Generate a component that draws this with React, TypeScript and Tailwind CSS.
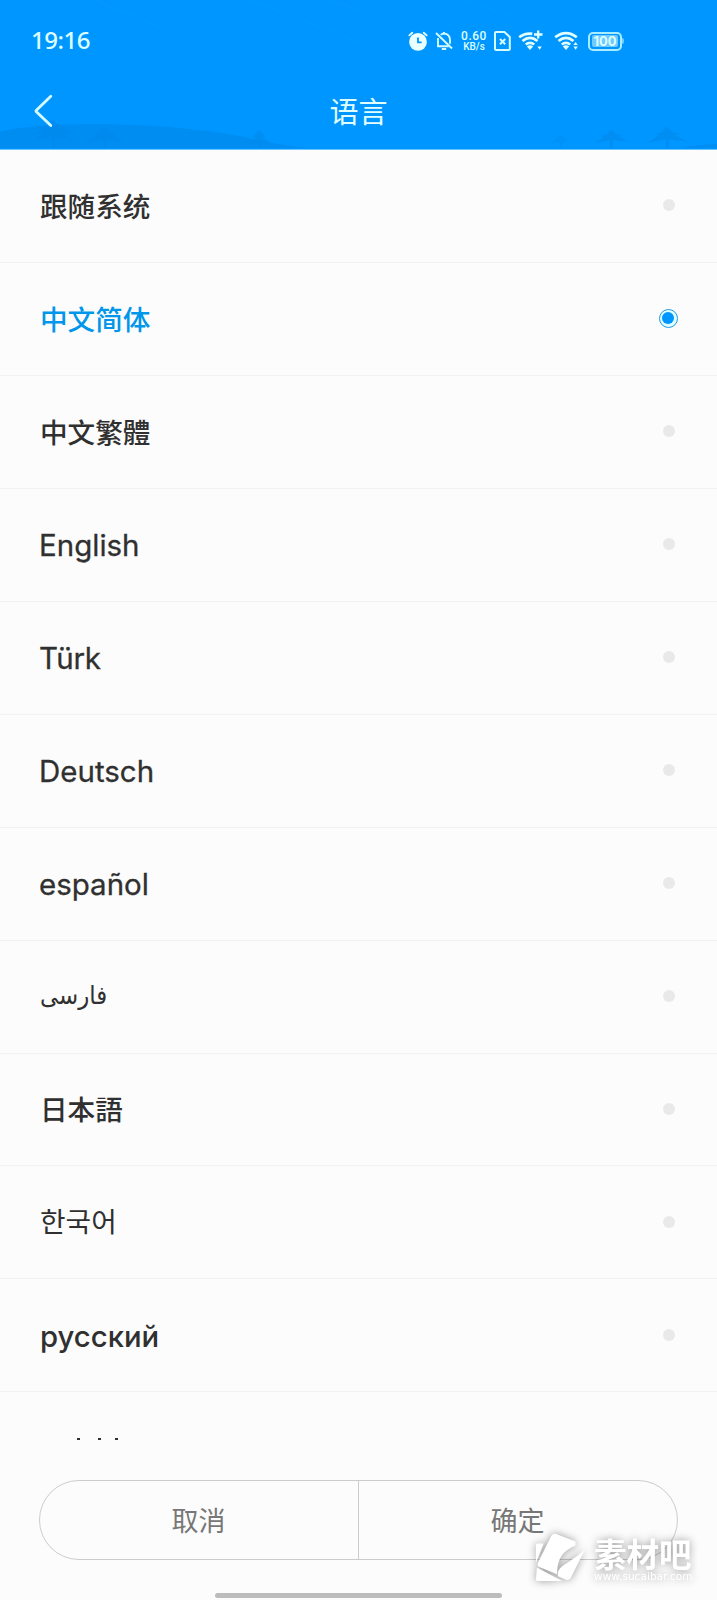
const languages = [
  { label: '跟随系统', style: "pb-[2px] font-['Noto_Sans_CJK_SC'] text-[27.6px] font-medium", lang: 'zh-CN' },
  { label: '中文简体', style: "pb-[2px] font-['Noto_Sans_CJK_SC'] text-[27.6px] font-medium", lang: 'zh-CN', selected: true },
  { label: '中文繁體', style: "pb-[2px] font-['Noto_Sans_CJK_SC'] text-[27.6px] font-medium", lang: 'zh-TW' },
  { label: 'English', style: "-ml-px pt-px font-['Inter'] text-[29.5px] font-normal [-webkit-text-stroke:0.3px_currentColor]", lang: 'en' },
  { label: 'Türk', style: "-ml-px pt-px font-['Inter'] text-[29.5px] font-normal tracking-[-0.3px] [-webkit-text-stroke:0.3px_currentColor]", lang: 'tr' },
  { label: 'Deutsch', style: "-ml-px pt-px font-['Inter'] text-[29.5px] font-normal [-webkit-text-stroke:0.3px_currentColor]", lang: 'de' },
  { label: 'español', style: "-ml-px pt-px font-['Inter'] text-[29.5px] font-normal [-webkit-text-stroke:0.3px_currentColor]", lang: 'es' },
  { label: 'فارسی', style: "pb-[3px] font-['DejaVu_Sans_Condensed','DejaVu_Sans'] text-[25.4px] font-normal [font-stretch:condensed]", lang: 'fa' },
  { label: '日本語', style: "pb-[2px] font-['Noto_Sans_CJK_JP'] text-[27.6px] font-medium", lang: 'ja' },
  { label: '한국어', style: "pb-[4px] font-['Noto_Sans_CJK_KR'] text-[27.8px] font-normal", lang: 'ko' },
  { label: 'русский', style: "pt-[3px] font-['Inter'] text-[29.3px] font-medium", lang: 'ru' },
];

function Scenery() {
  return (
    <svg className="absolute inset-0 h-full w-full" viewBox="0 0 717 150" preserveAspectRatio="none">
      <path d="M0 133C40 122 155 121 245 138Q275 146 310 149H0Z" fill="#008df1" />
      <g fill="#0088ea" opacity=".55">
        <path d="M52 120l9 7 8 2-5 1 12 6-14-2 13 8-20-4v11h-3v-11l-20 4 13-8-14 2 12-6-5-1 8-2z" />
        <path d="M104 127l7 6 7 2-5 1 12 8-19-4v9h-3v-9l-20 5 13-9-4-1 7-2z" />
        <path d="M259 131l7 7-4 0 9 6-10-1v6h-3v-6l-11 2 9-6-4-1z" />
        <path d="M611 130l6 5 6 1-4 1 10 6-16-2v8h-3v-8l-15 3 9-6-3-1 6-2z" />
        <path d="M666 127l7 6 7 2-5 1 13 7-19-3v9h-3v-9l-19 4 12-8-4-1 7-2z" />
        <path d="M561 135l5 5 5 3-9 0v6h-2v-6l-9 1 5-4z" opacity=".5" />
        <path d="M680 149Q700 145 717 145V149Z" />
      </g>
      <path d="M95 0L170 32M250 0L360 43M330 0L365 12M462 0L520 20" stroke="#1a9dff" strokeWidth="1" opacity=".25" />
    </svg>
  );
}

function AlarmIcon() {
  return (
    <svg className="h-5 w-5" viewBox="0 0 20 20" fill="none">
      <circle cx="10" cy="10.9" r="8.9" fill="#eaffff" />
      <path d="M1.3 4.4L4.3 1.8M18.7 4.4L15.7 1.8" stroke="#eaffff" strokeWidth="1.8" strokeLinecap="round" />
      <path d="M10 6.5V11.4H13.6" stroke="#0096ff" strokeWidth="1.8" />
    </svg>
  );
}

function MutedBellIcon() {
  return (
    <svg className="h-5 w-[18px]" viewBox="0 0 18 20" fill="none" stroke="#d5fbff" strokeWidth="1.9">
      <path d="M1 2L17 17.5" />
      <path d="M3 7V15.2H13.8M5.8 3.8Q7 2.6 9 2.5Q14.8 3 15 9V12.8M9 2.5V1" />
      <path d="M6.8 18H11.2" strokeWidth="2" />
    </svg>
  );
}

function SimIcon() {
  return (
    <svg className="h-5 w-[17px]" viewBox="0 0 17 20" fill="none" stroke="#d5fbff" strokeWidth="2">
      <path d="M2 1H10.4L15.8 6V18A1 1 0 0 1 14.8 19H2A1 1 0 0 1 1 18V2A1 1 0 0 1 2 1Z" />
      <path d="M6 8L11.2 13.2M11.2 8L6 13.2" />
    </svg>
  );
}

function WifiIcon({ plus = false }: { plus?: boolean }) {
  return (
    <svg className="h-5 w-[25px] overflow-visible" viewBox="0 0 25 20" fill="none" stroke="#e2ffff" strokeWidth="2.7">
      <path d={plus ? 'M1.2 6.3Q7 1.8 14.3 2.8' : 'M1.2 6.3Q12 -2 22.8 6.3'} />
      <path d="M4.5 10Q12 3.8 19.5 10" />
      <path d="M7.8 13.6Q12 10 16.2 13.6" />
      <path d="M8.8 15.4Q12 13 15.2 15.4L12 19Z" fill="#e2ffff" stroke="none" />
      {plus && <path d="M16 3.5H24.5M20.2 -0.5V7.5" strokeWidth="2.3" />}
      {!plus && <path d="M19.4 14L21.6 11L23.8 14Z" fill="#e2ffff" stroke="none" />}
      <path d="M19.4 15.6H23.8L21.6 18.8Z" fill="#e2ffff" stroke="none" />
    </svg>
  );
}

function StatusBar() {
  return (
    <div className="relative flex h-[82px] items-center pl-[31px] text-[#dcffff]">
      <span className="w-[377px] pb-[2px] font-['Noto_Sans'] text-[24px] font-medium leading-none tracking-[-0.5px]">19:16</span>
      <div className="flex h-5 items-center">
        <AlarmIcon />
        <span className="ml-[7px] flex"><MutedBellIcon /></span>
        <div className="ml-[8px] flex w-[26px] flex-col items-center font-['Roboto'] font-medium">
          <span className="text-[12px] leading-[12px] tracking-[0.5px]">0.60</span>
          <span className="text-[10px] leading-[10px]">KB/s</span>
        </div>
        <span className="ml-[7px] flex"><SimIcon /></span>
        <span className="ml-[7px] flex"><WifiIcon plus /></span>
        <span className="ml-[11px] flex"><WifiIcon /></span>
        <div className="ml-[9px] flex h-[19px] w-[34px] items-center justify-center rounded-[5px] border-2 border-[#a8edff] p-[2px]">
          <div className="flex h-[12px] w-full items-center justify-center rounded-[2px] bg-[#70c9ff] font-['Inter'] text-[13px] font-bold leading-none">100</div>
        </div>
        <span className="h-[6px] w-[2px] rounded-r bg-[#70c9ff]" />
      </div>
    </div>
  );
}

function Watermark() {
  return (
    <div className="absolute bottom-[17px] right-[25px] flex items-end [filter:drop-shadow(0_0_4px_rgba(0,0,0,0.4))]">
      <svg className="mr-[7px] h-[52px] w-[52px]" viewBox="0 0 54 52" fill="#fff">
        <path d="M1 14Q1 12 3 12H9L1 32ZM2 37L28 51H3Q1 51 1 49Z" />
        <path d="M17 4Q19 1 22 2L42 10L42 14C31 19 23 25 23 44L4 36Q2 35 3 32Z" />
        <path d="M52 18L38 46Q36 50 33 50L24 46C22 35 35 34 52 18Z" />
      </svg>
      <div className="flex w-[98px] flex-col text-[#fff]">
        <span className="whitespace-nowrap font-['Noto_Sans_CJK_SC'] text-[32.5px] font-bold leading-[33px]">素材吧</span>
        <span className="whitespace-nowrap font-['DejaVu_Sans'] text-[10.6px] leading-[14px]">www.sucaibar.com</span>
      </div>
    </div>
  );
}

export default function App() {
  return (
    <main className="relative flex h-[1600px] w-[717px] flex-col overflow-hidden bg-[#fcfcfc]">
      <header className="relative h-[150px] shrink-0 border-b border-[#68c4ff] bg-[#0096ff]">
        <Scenery />
        <StatusBar />
        <div className="relative grid h-[58px] grid-cols-[100px_1fr_100px] items-center">
          <button className="pl-[34px]" aria-label="返回">
            <svg className="h-[34px] w-5" viewBox="0 0 20 34" fill="none">
              <path d="M16.8 2.3L2.4 16.2Q1.6 17 2.4 17.8L16.8 31.5" stroke="#d5fbff" strokeWidth="2.8" strokeLinecap="round" />
            </svg>
          </button>
          <h1 className="pb-[2px] text-center font-['Noto_Sans_CJK_SC'] text-[29px] font-normal leading-[56px] text-[#e2ffff]">语言</h1>
        </div>
      </header>
      <ul className="h-[1291px] shrink-0 overflow-hidden">
        {languages.map(({ label, style, lang, selected }) => (
          <li key={label} className="flex h-[112.95px] items-center justify-between border-b border-[#f2f2f2] pl-10 pr-[39.5px]">
            <span lang={lang} className={`${style} leading-[40px] ${selected ? 'text-[#0096ea]' : 'text-[#303030]'}`}>{label}</span>
            {selected ? (
              <span className="mb-px flex h-[19px] w-[19px] items-center justify-center rounded-full border border-[#2299e5] bg-[#e0ffff]">
                <span className="h-[12px] w-[12px] rounded-full bg-[#0096ff]" />
              </span>
            ) : (
              <span className="mb-px mr-[3px] h-[12px] w-[12px] rounded-full bg-[#e9e9e9]" />
            )}
          </li>
        ))}
        <li className="flex h-[113px] pl-[76.5px] pt-[46px]">
          <span className="h-[2px] w-[3px] bg-[#303030]" />
          <span className="ml-[18.5px] h-[2px] w-[3px] bg-[#303030]" />
          <span className="ml-[13.5px] h-[2px] w-[3px] bg-[#303030]" />
        </li>
      </ul>
      <div className="mx-[39px] mt-[39px] flex h-20 shrink-0 divide-x divide-[#cccccc] rounded-full border border-[#cccccc] font-['Noto_Sans_CJK_SC'] text-[27px] text-[#777]">
        <button className="flex-1 pr-px pt-px">取消</button>
        <button className="flex-1 pr-px pt-px">确定</button>
      </div>
      <div className="mx-auto mt-[33px] h-[5px] w-[287px] shrink-0 rounded-full bg-[#bcbcbc]" />
      <Watermark />
    </main>
  );
}
